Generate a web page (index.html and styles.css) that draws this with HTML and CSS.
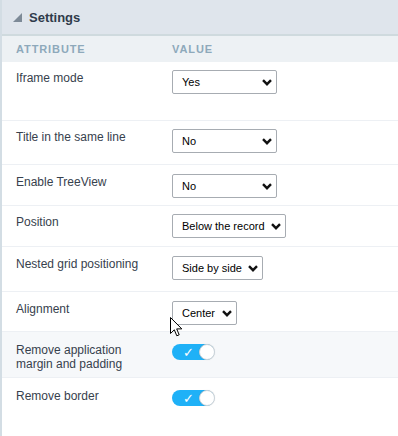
FILE: index.html
```html
<!DOCTYPE html>
<html>
<head>
<meta charset="utf-8">
<link rel="stylesheet" href="styles.css">
</head>
<body>
<div class="panel">
  <div class="panel-head">
    <svg class="caret" width="9" height="9" viewBox="0 0 9 9"><polygon points="9,0 9,9 0,9" fill="#7d8a97"/></svg>
    <span class="panel-title">Settings</span>
  </div>
  <div class="cols">
    <span class="col-attr">Attribute</span>
    <span class="col-val">Value</span>
  </div>
  <div class="row r1">
    <div class="label">Iframe mode</div>
    <div class="value"><div class="sel w105"><span>Yes</span><svg class="chev" width="10" height="7" viewBox="0 0 10 7"><polyline points="1,1.2 5,5.2 9,1.2" fill="none" stroke="#111" stroke-width="2.4"/></svg></div></div>
  </div>
  <div class="row r2">
    <div class="label">Title in the same line</div>
    <div class="value"><div class="sel w105"><span>No</span><svg class="chev" width="10" height="7" viewBox="0 0 10 7"><polyline points="1,1.2 5,5.2 9,1.2" fill="none" stroke="#111" stroke-width="2.4"/></svg></div></div>
  </div>
  <div class="row r3">
    <div class="label">Enable TreeView</div>
    <div class="value"><div class="sel w105"><span>No</span><svg class="chev" width="10" height="7" viewBox="0 0 10 7"><polyline points="1,1.2 5,5.2 9,1.2" fill="none" stroke="#111" stroke-width="2.4"/></svg></div></div>
  </div>
  <div class="row r4">
    <div class="label">Position</div>
    <div class="value"><div class="sel w114"><span>Below the record</span><svg class="chev" width="10" height="7" viewBox="0 0 10 7"><polyline points="1,1.2 5,5.2 9,1.2" fill="none" stroke="#111" stroke-width="2.4"/></svg></div></div>
  </div>
  <div class="row r5">
    <div class="label">Nested grid positioning</div>
    <div class="value"><div class="sel w91"><span>Side by side</span><svg class="chev" width="10" height="7" viewBox="0 0 10 7"><polyline points="1,1.2 5,5.2 9,1.2" fill="none" stroke="#111" stroke-width="2.4"/></svg></div></div>
  </div>
  <div class="row r6">
    <div class="label">Alignment</div>
    <div class="value"><div class="sel w65"><span>Center</span><svg class="chev" width="10" height="7" viewBox="0 0 10 7"><polyline points="1,1.2 5,5.2 9,1.2" fill="none" stroke="#111" stroke-width="2.4"/></svg></div></div>
  </div>
  <div class="row r7 shaded">
    <div class="label">Remove application<br>margin and padding</div>
    <div class="value"><div class="toggle"><span class="check">✓</span><span class="knob"></span></div></div>
  </div>
  <div class="row r8">
    <div class="label">Remove border</div>
    <div class="value"><div class="toggle"><span class="check">✓</span><span class="knob"></span></div></div>
  </div>
  <svg class="cursor" width="13" height="21" viewBox="0 0 13 21"><path d="M0.5,0.5 L0.5,16.5 L4.3,12.8 L6.8,18.8 L9.2,17.8 L6.7,11.9 L11.8,11.9 Z" fill="#fff" stroke="#000" stroke-width="1" stroke-linejoin="round"/></svg>
</div>
</body>
</html>
```

FILE: styles.css
```css
html, body {
  margin: 0;
  padding: 0;
  background: #fff;
}
body {
  font-family: "Liberation Sans", Arial, sans-serif;
  width: 398px;
  height: 436px;
  overflow: hidden;
}
.panel {
  position: relative;
  border-left: 2px solid #d3dde4;
  height: 436px;
  box-sizing: border-box;
}
.panel-head {
  height: 34px;
  background: #dfe5ec;
  border-bottom: 2px solid #cfdade;
  display: flex;
  align-items: center;
  padding-left: 11px;
  box-sizing: content-box;
}
.caret {
  margin-right: 7px;
  margin-top: 1px;
}
.panel-title {
  font-size: 13px;
  font-weight: bold;
  color: #2f3b4b;
}
.cols {
  height: 26px;
  background: #edf1f4;
  display: flex;
  align-items: center;
  font-size: 11px;
  font-weight: bold;
  letter-spacing: 0.9px;
  text-transform: uppercase;
  color: #8ea9bb;
}
.col-attr {
  width: 156px;
  padding-left: 14px;
}
.row {
  display: flex;
  border-bottom: 1px solid #edf0f4;
  box-sizing: border-box;
  padding-top: 8px;
}
.r1 { height: 59px; }
.r2 { height: 44px; }
.r3 { height: 41px; padding-top: 9px; }
.r4 { height: 41px; }
.r5 { height: 45px; padding-top: 9px; }
.r6 { height: 40px; padding-top: 9px; }
.r7 { height: 46px; padding-top: 10px; }
.r8 { height: 58px; padding-top: 10px; border-bottom: none; }
.shaded { background: #f6f8fa; }
.label {
  width: 156px;
  padding-left: 14px;
  font-size: 12px;
  line-height: 14px;
  color: #37414d;
  padding-top: 1px;
}
.value {
  flex: 1;
}
.sel {
  height: 24px;
  box-sizing: border-box;
  border: 1px solid #a7acb2;
  border-radius: 2px;
  background: #fff;
  display: flex;
  align-items: center;
  justify-content: space-between;
  padding: 0 4px 0 9px;
  font-size: 11px;
  white-space: nowrap;
  color: #000;
}
.w105 { width: 105px; }
.w114 { width: 114px; }
.w91 { width: 91px; }
.w65 { width: 65px; }
.chev { margin-top: 1px; flex: none; }
.toggle {
  position: relative;
  width: 42px;
  height: 16px;
  border-radius: 8px;
  background: #1fb1f7;
  margin-top: 2px;
}
.check {
  position: absolute;
  left: 11px;
  top: 0;
  font-size: 13px;
  font-weight: bold;
  line-height: 17px;
  color: #fff;
  font-family: "DejaVu Sans", sans-serif;
}
.knob {
  position: absolute;
  right: -1px;
  top: 0;
  width: 16px;
  height: 16px;
  box-sizing: border-box;
  border-radius: 50%;
  background: #fff;
  border: 1px solid #c9d3da;
  box-shadow: 0 0 1px rgba(0,0,0,0.15);
}
.cursor {
  position: absolute;
  left: 168px;
  top: 317px;
}
```
